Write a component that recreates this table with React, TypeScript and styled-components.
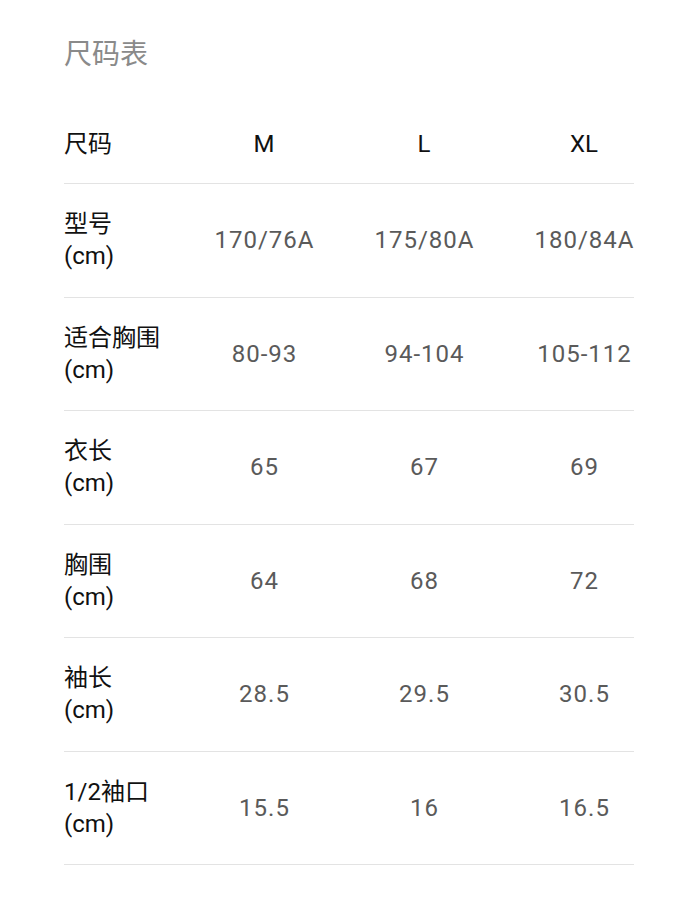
import styled, { createGlobalStyle } from 'styled-components';

const GlobalStyle = createGlobalStyle`
  body {
    margin: 0;
    background: #ffffff;
    font-family: Roboto, "Noto Sans CJK SC", sans-serif;
  }
`;

const sizes = ['M', 'L', 'XL'];

const rows = [
  { label: '型号', values: ['170/76A', '175/80A', '180/84A'] },
  { label: '适合胸围', values: ['80-93', '94-104', '105-112'] },
  { label: '衣长', values: ['65', '67', '69'] },
  { label: '胸围', values: ['64', '68', '72'] },
  { label: '袖长', values: ['28.5', '29.5', '30.5'] },
  { label: '1/2袖口', values: ['15.5', '16', '16.5'] },
];

const App = () => {
  return (
    <>
      <GlobalStyle />
      <Page>
        <Title>尺码表</Title>
        <Table>
          <HeaderRow>
            <Label>尺码</Label>
            {sizes.map((s) => (
              <HeadCell key={s}>{s}</HeadCell>
            ))}
          </HeaderRow>
          {rows.map((r) => (
            <Row key={r.label}>
              <Label>
                {r.label}
                <br />
                (cm)
              </Label>
              {r.values.map((v, i) => (
                <Cell key={i}>{v}</Cell>
              ))}
            </Row>
          ))}
        </Table>
      </Page>
    </>
  );
};

export default App;

const Page = styled.div`
  padding: 32px 0 0 64px;
`;

const Title = styled.h1`
  margin: 0;
  font-size: 28px;
  line-height: 40px;
  font-weight: 400;
  color: #8a8a8a;
  font-family: "Noto Sans CJK SC", sans-serif;
`;

const Table = styled.div`
  width: 570px;
  margin-top: 34px;
`;

const HeaderRow = styled.div`
  display: grid;
  grid-template-columns: 120px 160px 160px 160px;
  align-items: center;
  height: 78px;
  box-sizing: border-box;
  border-bottom: 1px solid #e3e3e3;
  padding-bottom: 2px;
`;

const Row = styled(HeaderRow)`
  height: 113.5px;
  padding-bottom: 0;
`;

const Label = styled.div`
  font-size: 24px;
  line-height: 32px;
  color: #111111;
  white-space: nowrap;
`;

const HeadCell = styled.div`
  text-align: center;
  font-size: 24px;
  color: #111111;
`;

const Cell = styled.div`
  text-align: center;
  font-size: 24px;
  letter-spacing: 1px;
  text-indent: 1px;
  color: #5a5a5a;
  white-space: nowrap;
`;
